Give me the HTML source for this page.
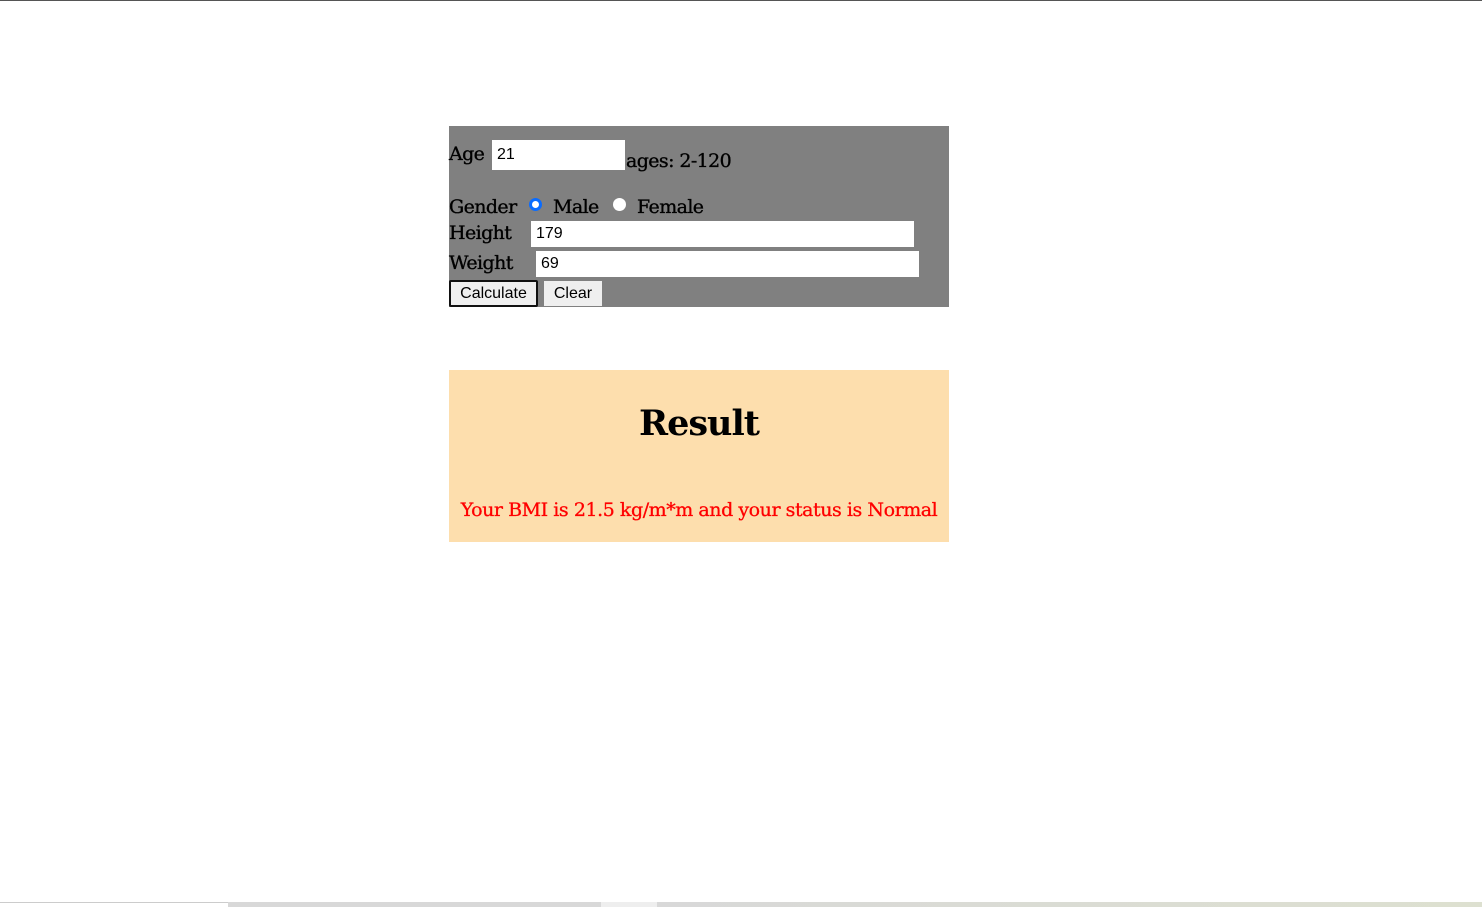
<!DOCTYPE html>
<html><head><style>
body{margin:0;width:1482px;height:907px;position:relative;background:#fff;font-family:"DejaVu Serif","Liberation Serif",serif;overflow:hidden}
.a{position:absolute;white-space:nowrap}
.t{font-size:19px;color:#000;letter-spacing:-0.6px;-webkit-text-stroke:0.35px #000}
.in{position:absolute;background:#fff;font-family:"Liberation Sans",sans-serif;font-size:16px;box-sizing:border-box;padding:5px 5px;line-height:20px}
.btn{position:absolute;background:#efefef;font-family:"Liberation Sans",sans-serif;font-size:16px;box-sizing:border-box;text-align:center;line-height:24px}
.r{position:absolute;width:13px;height:13px;border-radius:50%;background:#fff;box-sizing:border-box}
</style></head><body>
<div class="a" style="left:0;top:0;width:1482px;height:1px;background:#555"></div>
<div class="a" style="left:449px;top:126px;width:500px;height:181px;background:#808080"></div>
<div class="a t" style="left:449px;top:143px">Age</div>
<div class="in" style="left:492px;top:140px;width:133px;height:30px">21</div>
<div class="a t" style="left:626px;top:150px">ages: 2-120</div>
<div class="a t" style="left:449px;top:196px">Gender</div>
<div class="r" style="left:529px;top:198px;border:3px solid #0a6cff"></div>
<div class="a t" style="left:553px;top:196px">Male</div>
<div class="r" style="left:613px;top:198px"></div>
<div class="a t" style="left:637px;top:196px">Female</div>
<div class="a t" style="left:449px;top:222px">Height</div>
<div class="in" style="left:531px;top:221px;width:383px;height:26px;padding-top:3px">179</div>
<div class="a t" style="left:449px;top:252px">Weight</div>
<div class="in" style="left:536px;top:251px;width:383px;height:26px;padding-top:3px">69</div>
<div class="btn" style="left:449px;top:280px;width:89px;height:27px;border:2px solid #111;border-radius:2px;line-height:24px">Calculate</div>
<div class="btn" style="left:544px;top:281px;width:58px;height:25px;line-height:25px">Clear</div>
<div class="a" style="left:449px;top:370px;width:500px;height:172px;background:#fddead"></div>
<div class="a" style="left:449px;top:403px;width:500px;text-align:center;font-size:35px;font-weight:bold;letter-spacing:-1px">Result</div>
<div class="a" style="left:449px;top:499px;width:500px;text-align:center;font-size:19px;color:#f00;letter-spacing:-0.45px;-webkit-text-stroke:0.3px #f00">Your BMI is 21.5 kg/m*m and your status is Normal</div>
<div class="a" style="left:0;top:902px;width:228px;height:1px;background:#ccc"></div>
<div class="a" style="left:228px;top:902px;width:373px;height:5px;background:#d8d8d8"></div>
<div class="a" style="left:601px;top:902px;width:56px;height:5px;background:#eee"></div>
<div class="a" style="left:657px;top:902px;width:825px;height:5px;background:linear-gradient(90deg,#d8d8d8,#dde0d0)"></div>
</body></html>
